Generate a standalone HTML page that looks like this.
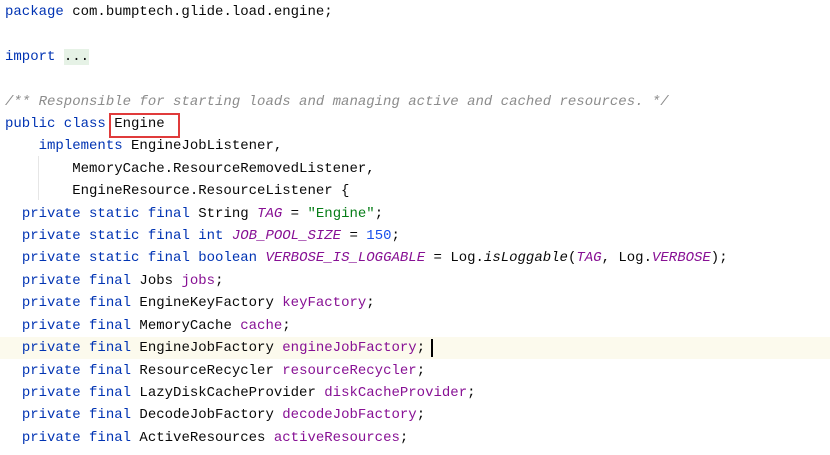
<!DOCTYPE html>
<html><head><style>
html,body{margin:0;padding:0;background:#fff;width:830px;height:455px;overflow:hidden}
#c{position:absolute;left:5px;top:1px;font-family:"Liberation Mono",monospace;font-size:14px;line-height:22.4px;color:#080808;white-space:pre}
.k{color:#0033b3}.c{color:#8c8c8c;font-style:italic}.s{color:#067d17}.n{color:#1750eb}.f{color:#871094}.sf{color:#871094;font-style:italic}.i{font-style:italic}
.hl{position:absolute;left:0;width:830px;top:337px;height:22.4px;background:#fcfaed}
.box{position:absolute;left:109px;top:113px;width:67px;height:21px;border:2px solid #e03b3b}
.dots{background:#e6f2e6}
.cur{position:absolute;left:431px;top:339px;width:2px;height:18px;background:#000}
.guide{position:absolute;left:38px;top:156px;width:1px;height:44px;background:#e6e6e6}
</style></head><body>
<div class="hl"></div>
<div class="guide"></div>
<div class="box"></div>
<div class="cur"></div>
<div id="c"><span class="k">package</span> com.bumptech.glide.load.engine;

<span class="k">import</span> <span class="dots">...</span>

<span class="c">/** Responsible for starting loads and managing active and cached resources. */</span>
<span class="k">public class</span> Engine
    <span class="k">implements</span> EngineJobListener,
        MemoryCache.ResourceRemovedListener,
        EngineResource.ResourceListener {
  <span class="k">private static final</span> String <span class="sf">TAG</span> = <span class="s">"Engine"</span>;
  <span class="k">private static final int</span> <span class="sf">JOB_POOL_SIZE</span> = <span class="n">150</span>;
  <span class="k">private static final boolean</span> <span class="sf">VERBOSE_IS_LOGGABLE</span> = Log.<span class="i">isLoggable</span>(<span class="sf">TAG</span>, Log.<span class="sf">VERBOSE</span>);
  <span class="k">private final</span> Jobs <span class="f">jobs</span>;
  <span class="k">private final</span> EngineKeyFactory <span class="f">keyFactory</span>;
  <span class="k">private final</span> MemoryCache <span class="f">cache</span>;
  <span class="k">private final</span> EngineJobFactory <span class="f">engineJobFactory</span>;
  <span class="k">private final</span> ResourceRecycler <span class="f">resourceRecycler</span>;
  <span class="k">private final</span> LazyDiskCacheProvider <span class="f">diskCacheProvider</span>;
  <span class="k">private final</span> DecodeJobFactory <span class="f">decodeJobFactory</span>;
  <span class="k">private final</span> ActiveResources <span class="f">activeResources</span>;</div>
</body></html>
